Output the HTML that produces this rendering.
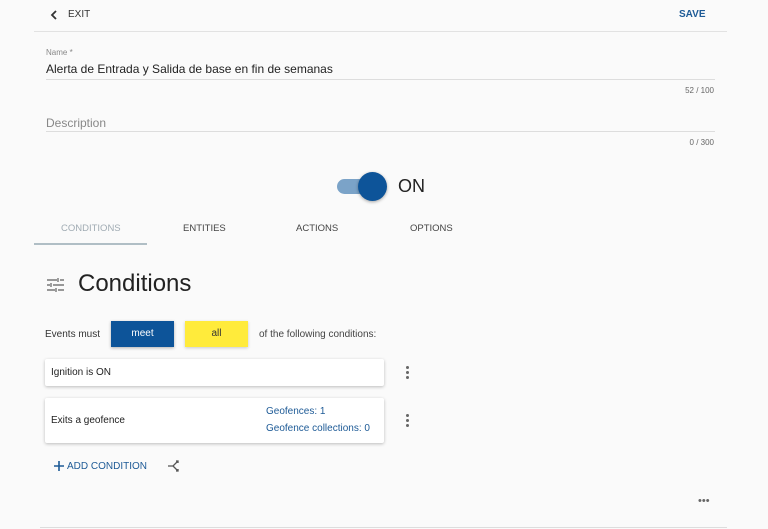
<!DOCTYPE html>
<html><head><style>
body{margin:0;width:768px;height:529px;background:#fafafa;font-family:"Liberation Sans",sans-serif;position:relative;overflow:hidden;color:#222}
.a{position:absolute;white-space:nowrap}
.card{position:absolute;background:#fff;box-shadow:0 1px 3px rgba(0,0,0,.25);border-radius:2px}
.dots{position:absolute;width:3px}
.dots i{display:block;width:3px;height:3px;border-radius:50%;background:#666;margin-bottom:2px}
</style></head><body>
<svg class="a" style="left:50px;top:10px" width="8" height="10" viewBox="0 0 8 10" stroke="#333" stroke-width="1.8" fill="none"><path d="M6 1L2 5l4 4"/></svg>
<div class="a" style="left:68px;top:9px;font-size:10px;color:#333">EXIT</div>
<div class="a" style="left:679px;top:9px;font-size:10px;color:#1d5a96;font-weight:bold">SAVE</div>
<div class="a" style="left:34px;top:31px;width:693px;height:1px;background:#e2e2e2"></div>
<div class="a" style="left:46px;top:48px;font-size:8px;color:#888">Name *</div>
<div class="a" style="left:46px;top:62px;font-size:12px;color:#222">Alerta de Entrada y Salida de base en fin de semanas</div>
<div class="a" style="left:46px;top:79px;width:669px;height:1px;background:#ddd"></div>
<div class="a" style="right:54px;top:86px;font-size:8px;color:#666">52 / 100</div>
<div class="a" style="left:46px;top:116px;font-size:12px;color:#888">Description</div>
<div class="a" style="left:46px;top:131px;width:669px;height:1px;background:#ddd"></div>
<div class="a" style="right:54px;top:138px;font-size:8px;color:#666">0 / 300</div>
<div class="a" style="left:337px;top:179px;width:44px;height:15px;border-radius:8px;background:#7ba3c8"></div>
<div class="a" style="left:358px;top:172px;width:29px;height:29px;border-radius:50%;background:#0d5499;box-shadow:0 1px 3px rgba(0,0,0,.35)"></div>
<div class="a" style="left:398px;top:176px;font-size:18px;color:#222">ON</div>
<div class="a" style="left:61px;top:223px;font-size:9.5px;color:#a0abb3">CONDITIONS</div>
<div class="a" style="left:183px;top:223px;font-size:9.5px;color:#444">ENTITIES</div>
<div class="a" style="left:296px;top:223px;font-size:9.5px;color:#444">ACTIONS</div>
<div class="a" style="left:410px;top:223px;font-size:9.5px;color:#444">OPTIONS</div>
<div class="a" style="left:34px;top:243px;width:113px;height:2px;background:#b0bec5"></div>
<svg class="a" style="left:46px;top:277px" width="19" height="16" viewBox="0 0 19 16" stroke="#777" stroke-width="1.4" fill="none"><path d="M1 3h10M14 3h4M12 1v4M1 8h3M7 8h11M5 6v4M1 13h8M12 13h6M10 11v4"/></svg>
<div class="a" style="left:78px;top:270px;font-size:24px;color:#222">Conditions</div>
<div class="a" style="left:45px;top:329px;font-size:10px;color:#333">Events must</div>
<div class="a" style="left:111px;top:321px;width:63px;height:26px;background:#0d5499;color:#fff;font-size:10px;text-align:center;line-height:26px;box-shadow:0 1px 3px rgba(0,0,0,.3)">meet</div>
<div class="a" style="left:185px;top:321px;width:63px;height:26px;background:#ffeb3b;color:#333;font-size:10px;text-align:center;line-height:26px;box-shadow:0 1px 3px rgba(0,0,0,.2)">all</div>
<div class="a" style="left:259px;top:329px;font-size:10px;color:#444">of the following conditions:</div>
<div class="card" style="left:45px;top:359px;width:339px;height:27px"></div>
<div class="a" style="left:51px;top:367px;font-size:10px;color:#222">Ignition is ON</div>
<div class="dots" style="left:406px;top:366px"><i></i><i></i><i></i></div>
<div class="card" style="left:45px;top:398px;width:339px;height:45px"></div>
<div class="a" style="left:51px;top:415px;font-size:10px;color:#222">Exits a geofence</div>
<div class="a" style="left:266px;top:406px;font-size:10px;color:#1d5a96">Geofences: 1</div>
<div class="a" style="left:266px;top:423px;font-size:10px;color:#1d5a96">Geofence collections: 0</div>
<div class="dots" style="left:406px;top:414px"><i></i><i></i><i></i></div>
<svg class="a" style="left:53px;top:460px" width="12" height="12" viewBox="0 0 12 12" stroke="#1d5a96" stroke-width="1.6"><path d="M6 1v10M1 6h10"/></svg>
<div class="a" style="left:67px;top:461px;font-size:10px;color:#1d5a96">ADD CONDITION</div>
<svg class="a" style="left:166px;top:458px" width="16" height="16" viewBox="0 0 16 16" stroke="#555" stroke-width="1.3" fill="none"><path d="M2 8h5l5-5M10 3h2v2M7 8l5 5M10 13h2v-2"/></svg>
<div class="a" style="left:698px;top:495px;font-size:11px;color:#666;letter-spacing:0">•••</div>
<div class="a" style="left:40px;top:527px;width:687px;height:1px;background:#ddd"></div>
</body></html>
